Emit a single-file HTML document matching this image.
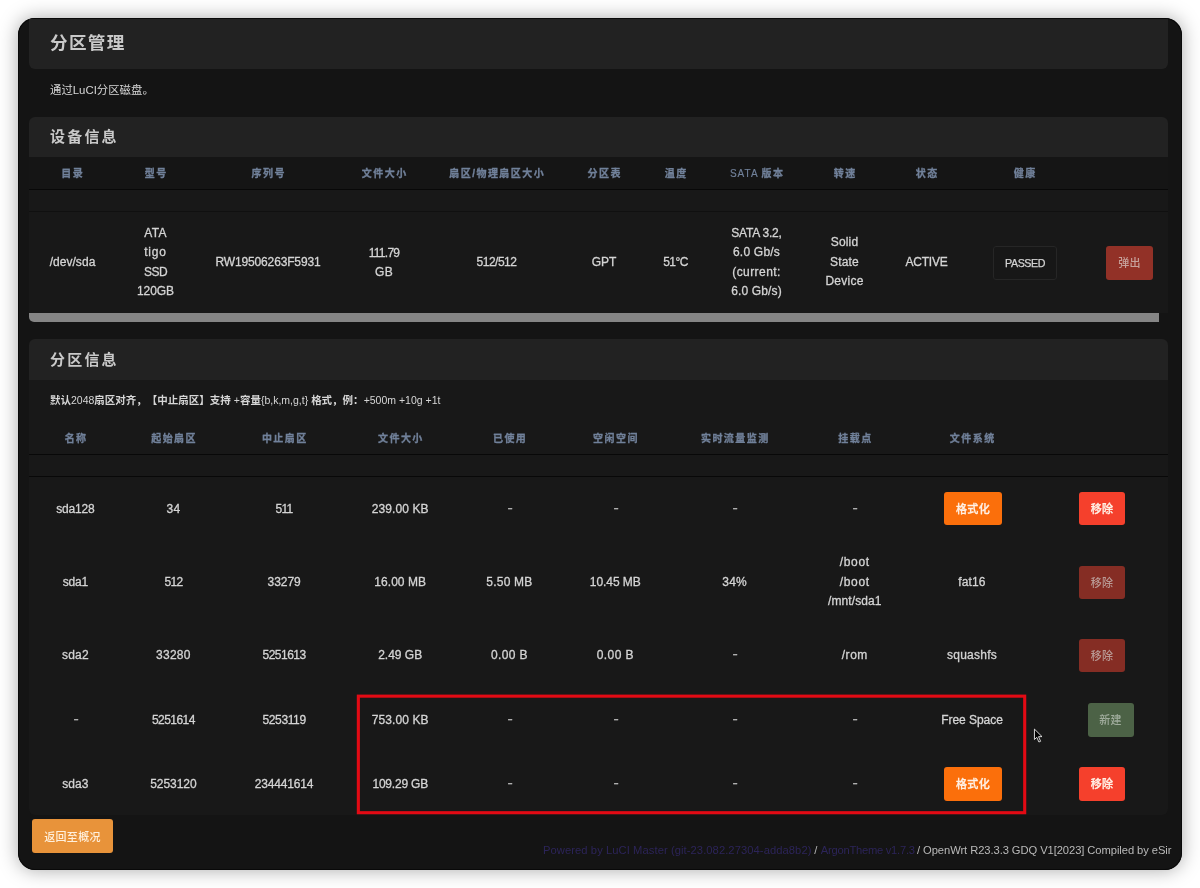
<!DOCTYPE html>
<html lang="zh-CN">
<head>
<meta charset="utf-8">
<title>分区管理</title>
<style>
html,body{margin:0;padding:0;}
body{width:1200px;height:888px;background:#fff;position:relative;overflow:hidden;
  font-family:"Liberation Sans","Noto Sans CJK SC",sans-serif;font-size:12px;color:#d4d4d4;}
#win{position:absolute;left:18px;top:18px;width:1164px;height:852px;background:#141414;border-radius:17px;
  box-shadow:0 0 19px rgba(0,0,0,.34),inset 0 0 0 1px #090909;overflow:hidden;}
#page{position:absolute;left:-18px;top:-18px;width:1200px;height:888px;will-change:transform;-webkit-font-smoothing:antialiased;}
.abs{position:absolute;}
h2,h3{margin:0;position:absolute;left:29px;width:1139px;background:#222;color:#c9c9c9;font-weight:bold;
  box-sizing:border-box;padding-left:21px;white-space:nowrap;}
h2{top:19px;height:50px;line-height:48.6px;font-size:17.6px;letter-spacing:1.3px;border-radius:0 0 6px 6px;}
h3{height:40px;line-height:40px;font-size:15px;letter-spacing:2.2px;border-radius:6px 6px 0 0;}
.card{position:absolute;left:29px;width:1139px;background:#181818;}
.hl{position:absolute;left:29px;width:1139px;height:1px;background:#080808;}
.c{position:absolute;transform:translate(-50%,-50%);white-space:nowrap;text-align:center;line-height:19.45px;-webkit-text-stroke:.3px #d4d4d4;}
.l{display:block;}
.d .l{position:relative;top:-1px;left:.7px;transform:scaleX(1.3);opacity:.85;}
.th{position:absolute;transform:translate(-50%,-50%);white-space:nowrap;text-align:center;
  font-size:10px;font-weight:bold;letter-spacing:1.45px;color:#71819a;line-height:12px;-webkit-text-stroke:.3px #71819a;padding-left:1.45px;}
.th .n{font-weight:normal;-webkit-text-stroke:.15px #71819a;letter-spacing:1px;margin-right:-1.2px;}
.btn{position:absolute;box-sizing:border-box;border-radius:3px;color:#fff1e6;font-weight:500;font-size:11px;
  text-align:center;white-space:nowrap;letter-spacing:.3px;}
.desc{position:absolute;left:50px;white-space:nowrap;}
a{text-decoration:none;color:#2c2459;}
.f{position:absolute;white-space:nowrap;line-height:18px;font-size:11.2px;color:#b9b9b9;}
a.f{color:#2c2459;}
.fmt{width:58px;height:33px;line-height:34px;background:#fb6f0b;-webkit-text-stroke:.3px #fff1e6;}
.rm{width:46px;height:33px;line-height:34px;background:#f5402c;-webkit-text-stroke:.3px #fff1e6;}
.rm.dis{background:#852d24;color:#b99a95;font-weight:500;-webkit-text-stroke:0;}
.new{width:46px;height:33.5px;line-height:34px;background:#4c6246;color:#a0ac9d;font-weight:500;}
</style>
</head>
<body>
<div id="win"><div id="page">

<h2>分区管理</h2>
<div class="desc" style="top:81px;line-height:18px;font-size:11.4px;color:#d6d6d6;">通过LuCI分区磁盘。</div>
<h3 style="top:117.2px;">设备信息</h3>
<div class="card" style="top:157px;height:156px;"></div>
<div class="card" style="top:157px;height:32px;background:#151515;"></div>
<div class="hl" style="top:189px;"></div>
<div class="hl" style="top:211px;background:#101010;"></div>
<div class="th" style="left:72px;top:174px;">目录</div>
<div class="th" style="left:155.5px;top:174px;">型号</div>
<div class="th" style="left:268px;top:174px;">序列号</div>
<div class="th" style="left:384px;top:174px;">文件大小</div>
<div class="th" style="left:496.5px;top:174px;">扇区/物理扇区大小</div>
<div class="th" style="left:604px;top:174px;">分区表</div>
<div class="th" style="left:675.5px;top:174px;">温度</div>
<div class="th" style="left:756.5px;top:174px;"><span class="n">SATA</span> 版本</div>
<div class="th" style="left:844.5px;top:174px;">转速</div>
<div class="th" style="left:926.5px;top:174px;">状态</div>
<div class="th" style="left:1024.5px;top:174px;">健康</div>
<div class="c" style="left:72.5px;top:262.7px;"><span class="l" style="letter-spacing:0.04px">/dev/sda</span></div>
<div class="c" style="left:155.5px;top:262.7px;"><span class="l" style="letter-spacing:0.25px">ATA</span><span class="l" style="letter-spacing:0.79px">tigo</span><span class="l" style="letter-spacing:-0.56px">SSD</span><span class="l" style="letter-spacing:-0.07px">120GB</span></div>
<div class="c" style="left:268px;top:262.7px;"><span class="l" style="letter-spacing:-0.15px">RW19506263F5931</span></div>
<div class="c" style="left:384px;top:262.7px;"><span class="l" style="letter-spacing:-0.72px">111.79</span><span class="l" style="letter-spacing:0.43px">GB</span></div>
<div class="c" style="left:496.5px;top:262.7px;"><span class="l" style="letter-spacing:-0.51px">512/512</span></div>
<div class="c" style="left:604px;top:262.7px;"><span class="l" style="letter-spacing:-0.02px">GPT</span></div>
<div class="c" style="left:675.5px;top:262.7px;"><span class="l" style="letter-spacing:-0.55px">51°C</span></div>
<div class="c" style="left:756.5px;top:262.7px;"><span class="l" style="letter-spacing:-0.21px">SATA 3.2,</span><span class="l" style="letter-spacing:0.22px">6.0 Gb/s</span><span class="l" style="letter-spacing:0.43px">(current:</span><span class="l" style="letter-spacing:0.15px">6.0 Gb/s)</span></div>
<div class="c" style="left:844.5px;top:262.4px;"><span class="l" style="letter-spacing:0.18px">Solid</span><span class="l" style="letter-spacing:0.17px">State</span><span class="l" style="letter-spacing:0.25px">Device</span></div>
<div class="c" style="left:926.5px;top:262.7px;"><span class="l" style="letter-spacing:-0.22px">ACTIVE</span></div>
<div class="btn" style="left:993px;top:246px;width:64px;height:34px;line-height:32px;border:1px solid #262626;background:#171717;color:#d2d2d2;font-weight:normal;font-size:10.7px;letter-spacing:-.45px;-webkit-text-stroke:.25px #d2d2d2;">PASSED</div>
<div class="btn" style="left:1106px;top:246px;width:47px;height:34px;line-height:35px;background:#923127;color:#c7a19b;font-weight:500;">弹出</div>
<div class="abs" style="left:29px;top:313px;width:1130px;height:9px;background:#858585;border-radius:0 0 0 5px;"></div>
<h3 style="top:339.2px;height:40.7px;line-height:41.2px;">分区信息</h3>
<div class="card" style="top:380px;height:435px;border-radius:0 0 6px 6px;"></div>
<div class="desc" style="top:391px;line-height:18px;font-size:10.5px;color:#d6d6d6;text-spacing-trim:space-all;"><b>默认</b>2048<b>扇区对齐，【中止扇区】支持</b> +<b>容量</b>{b,k,m,g,t} <b>格式，例：</b>+500m +10g +1t</div>
<div class="hl" style="top:454px;"></div>
<div class="hl" style="top:476px;"></div>
<div class="th" style="left:75.4px;top:439.3px;">名称</div>
<div class="th" style="left:173.4px;top:439.3px;">起始扇区</div>
<div class="th" style="left:284.1px;top:439.3px;">中止扇区</div>
<div class="th" style="left:400.2px;top:439.3px;">文件大小</div>
<div class="th" style="left:509.4px;top:439.3px;">已使用</div>
<div class="th" style="left:615.3px;top:439.3px;">空闲空间</div>
<div class="th" style="left:734.6px;top:439.3px;">实时流量监测</div>
<div class="th" style="left:854.8px;top:439.3px;">挂载点</div>
<div class="th" style="left:972px;top:439.3px;">文件系统</div>
<div class="c" style="left:75.4px;top:509.84px;"><span class="l" style="letter-spacing:-0.15px">sda128</span></div>
<div class="c" style="left:173.4px;top:509.84px;"><span class="l" style="letter-spacing:0.17px">34</span></div>
<div class="c" style="left:284.1px;top:509.84px;"><span class="l" style="letter-spacing:-0.71px">511</span></div>
<div class="c" style="left:400.2px;top:509.84px;"><span class="l" style="letter-spacing:0.11px">239.00 KB</span></div>
<div class="c d" style="left:509.4px;top:509.84px;"><span class="l">-</span></div>
<div class="c d" style="left:615.3px;top:509.84px;"><span class="l">-</span></div>
<div class="c d" style="left:734.6px;top:509.84px;"><span class="l">-</span></div>
<div class="c d" style="left:854.8px;top:509.84px;"><span class="l">-</span></div>
<div class="c" style="left:75.4px;top:582.7px;"><span class="l" style="letter-spacing:-0.18px">sda1</span></div>
<div class="c" style="left:173.4px;top:582.7px;"><span class="l" style="letter-spacing:-0.68px">512</span></div>
<div class="c" style="left:284.1px;top:582.7px;"><span class="l" style="letter-spacing:-0.04px">33279</span></div>
<div class="c" style="left:400.2px;top:582.7px;"><span class="l" style="letter-spacing:0.04px">16.00 MB</span></div>
<div class="c" style="left:509.4px;top:582.7px;"><span class="l" style="letter-spacing:0.20px">5.50 MB</span></div>
<div class="c" style="left:615.3px;top:582.7px;"><span class="l" style="letter-spacing:-0.06px">10.45 MB</span></div>
<div class="c" style="left:734.6px;top:582.7px;"><span class="l" style="letter-spacing:0.19px">34%</span></div>
<div class="c" style="left:854.8px;top:582.2px;"><span class="l" style="letter-spacing:0.68px">/boot</span><span class="l" style="letter-spacing:0.68px">/boot</span><span class="l" style="letter-spacing:0.08px">/mnt/sda1</span></div>
<div class="c" style="left:972px;top:582.7px;"><span class="l" style="letter-spacing:0.12px">fat16</span></div>
<div class="c" style="left:75.4px;top:655.9px;"><span class="l" style="letter-spacing:0.19px">sda2</span></div>
<div class="c" style="left:173.4px;top:655.9px;"><span class="l" style="letter-spacing:0.27px">33280</span></div>
<div class="c" style="left:284.1px;top:655.9px;"><span class="l" style="letter-spacing:-0.49px">5251613</span></div>
<div class="c" style="left:400.2px;top:655.9px;"><span class="l">2.49 GB</span></div>
<div class="c" style="left:509.4px;top:655.9px;"><span class="l" style="letter-spacing:0.38px">0.00 B</span></div>
<div class="c" style="left:615.3px;top:655.9px;"><span class="l" style="letter-spacing:0.38px">0.00 B</span></div>
<div class="c d" style="left:734.6px;top:655.9px;"><span class="l">-</span></div>
<div class="c" style="left:854.8px;top:655.9px;"><span class="l" style="letter-spacing:0.57px">/rom</span></div>
<div class="c" style="left:972px;top:655.9px;"><span class="l" style="letter-spacing:0.23px">squashfs</span></div>
<div class="c d" style="left:75.4px;top:720.9px;"><span class="l">-</span></div>
<div class="c" style="left:173.4px;top:720.9px;"><span class="l" style="letter-spacing:-0.56px">5251614</span></div>
<div class="c" style="left:284.1px;top:720.9px;"><span class="l" style="letter-spacing:-0.36px">5253119</span></div>
<div class="c" style="left:400.2px;top:720.9px;"><span class="l" style="letter-spacing:0.11px">753.00 KB</span></div>
<div class="c d" style="left:509.4px;top:720.9px;"><span class="l">-</span></div>
<div class="c d" style="left:615.3px;top:720.9px;"><span class="l">-</span></div>
<div class="c d" style="left:734.6px;top:720.9px;"><span class="l">-</span></div>
<div class="c d" style="left:854.8px;top:720.9px;"><span class="l">-</span></div>
<div class="c" style="left:972px;top:720.9px;"><span class="l" style="letter-spacing:-0.03px">Free Space</span></div>
<div class="c" style="left:75.4px;top:784.84px;"><span class="l" style="letter-spacing:0.12px">sda3</span></div>
<div class="c" style="left:173.4px;top:784.84px;"><span class="l" style="letter-spacing:-0.03px">5253120</span></div>
<div class="c" style="left:284.1px;top:784.84px;"><span class="l" style="letter-spacing:-0.17px">234441614</span></div>
<div class="c" style="left:400.2px;top:784.84px;"><span class="l" style="letter-spacing:-0.21px">109.29 GB</span></div>
<div class="c d" style="left:509.4px;top:784.84px;"><span class="l">-</span></div>
<div class="c d" style="left:615.3px;top:784.84px;"><span class="l">-</span></div>
<div class="c d" style="left:734.6px;top:784.84px;"><span class="l">-</span></div>
<div class="c d" style="left:854.8px;top:784.84px;"><span class="l">-</span></div>
<div class="btn fmt" style="left:944px;top:492.3px;">格式化</div>
<div class="btn rm" style="left:1079px;top:492.3px;">移除</div>
<div class="btn rm dis" style="left:1079px;top:566px;">移除</div>
<div class="btn rm dis" style="left:1079px;top:638.7px;">移除</div>
<div class="btn new" style="left:1087.5px;top:703px;">新建</div>
<div class="btn fmt" style="left:944px;top:767.2px;height:34px;line-height:35px;">格式化</div>
<div class="btn rm" style="left:1079px;top:767.2px;height:34px;line-height:35px;">移除</div>
<svg class="abs" style="left:350px;top:690px;" width="690" height="130" viewBox="0 0 690 130"><rect x="8.35" y="6.15" width="666.35" height="116.55" fill="none" stroke="#e30a14" stroke-width="3.1"/></svg>
<svg class="abs" style="left:1033px;top:727.4px;" width="12" height="17" viewBox="-1 -1 12 17"><path d="M0.45 1.1 L0.45 11.5 L2.8 9.3 L4.9 14.0 L6.6 13.3 L4.5 8.7 L8.0 8.6 Z" fill="#000" stroke="#f6f6f6" stroke-width="0.85" stroke-linejoin="miter"/></svg>
<div class="btn" style="left:32px;top:819px;width:81px;height:34px;line-height:36px;background:#e8933a;color:#fff0dc;font-weight:500;font-size:11px;">返回至概况</div>
<div id="foot">
<a class="f" style="left:543.0px;top:840.7px;letter-spacing:0.073px;">Powered by LuCI Master (git-23.082.27304-adda8b2)</a>
<span class="f" style="left:814.3px;top:840.7px;letter-spacing:0.000px;">/</span>
<a class="f" style="left:820.8px;top:840.7px;letter-spacing:-0.254px;">ArgonTheme v1.7.3</a>
<span class="f" style="left:917.0px;top:840.7px;letter-spacing:-0.074px;">/ OpenWrt R23.3.3 GDQ V1[2023] Compiled by eSir</span>
</div>

</div></div>
</body>
</html>
